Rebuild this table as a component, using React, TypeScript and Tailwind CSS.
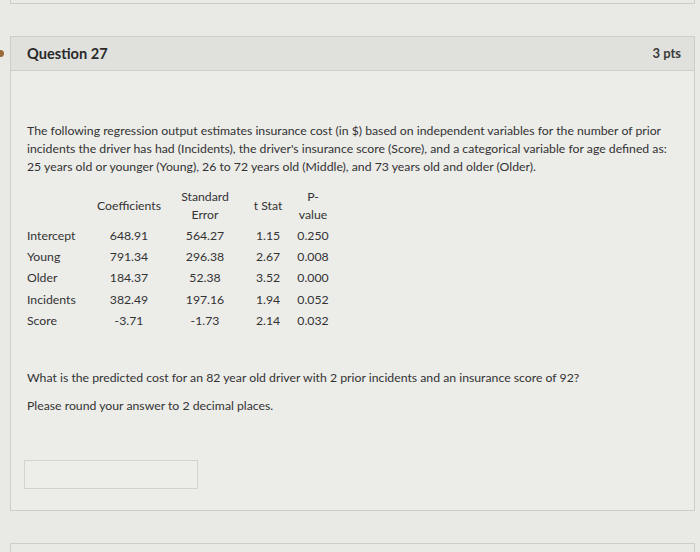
import React from 'react';

const rows = [
  { name: 'Intercept', coef: '648.91', se: '564.27', t: '1.15', p: '0.250' },
  { name: 'Young', coef: '791.34', se: '296.38', t: '2.67', p: '0.008' },
  { name: 'Older', coef: '184.37', se: '52.38', t: '3.52', p: '0.000' },
  { name: 'Incidents', coef: '382.49', se: '197.16', t: '1.94', p: '0.052' },
  { name: 'Score', coef: '-3.71', se: '-1.73', t: '2.14', p: '0.032' },
];

const cols = 'grid grid-cols-[65px_74px_78px_48px_42px] items-center text-center';

const App: React.FC = () => {
  return (
    <div className="relative w-[700px] h-[552px] overflow-hidden bg-[#e9e9e6] pl-[10px] pr-[5px] font-['Lato','Open_Sans',sans-serif] text-[#333333]">
      {/* bottom of previous question */}
      <div className="h-[4px] border-x border-b border-[#cdcdca]" />

      {/* marker on the left edge */}
      <div className="absolute left-0 top-[50px] w-[4px] h-[7px] rounded-r-full bg-[#9a6a3a]" />

      <div className="mt-[32px] border border-[#cdcdca] bg-[#ecece9]">
        <div className="flex items-center justify-between h-[34px] pl-[16px] pr-[13px] bg-[#e0e0dd] border-b border-[#cdcdca]">
          <span className="text-[14.6px] font-bold text-[#2a2a2a]">Question 27</span>
          <span className="text-[13px] font-bold text-[#3a3a3a]">3 pts</span>
        </div>

        <div className="px-[16px] pt-[51px] pb-[21px] text-[12.25px] leading-[18px]">
          <p className="w-[650px]">
            The following regression output estimates insurance cost (in $) based on independent variables for the number of prior
            incidents the driver has had (Incidents), the driver's insurance score (Score), and a categorical variable for age defined as:
            25 years old or younger (Young), 26 to 72 years old (Middle), and 73 years old and older (Older).
          </p>

          <div className="mt-[11px] w-fit">
            <div className={`${cols} h-[38px]`}>
              <span />
              <span>Coefficients</span>
              <span>Standard<br />Error</span>
              <span>t Stat</span>
              <span>P-<br />value</span>
            </div>
            {rows.map((r) => (
              <div key={r.name} className={`${cols} h-[21.3px]`}>
                <span className="text-left">{r.name}</span>
                <span>{r.coef}</span>
                <span>{r.se}</span>
                <span>{r.t}</span>
                <span>{r.p}</span>
              </div>
            ))}
          </div>

          <p className="mt-[38px]">What is the predicted cost for an 82 year old driver with 2 prior incidents and an insurance score of 92?</p>
          <p className="mt-[10px]">Please round your answer to 2 decimal places.</p>

          <div className="mt-[45px] -ml-[3px] w-[174px] h-[29px] border border-[#d3d3d0] bg-[#ededea]" />
        </div>
      </div>

      {/* top of next question */}
      <div className="mt-[32px] h-[20px] border-x border-t border-[#cdcdca]" />
    </div>
  );
};

export default App;
